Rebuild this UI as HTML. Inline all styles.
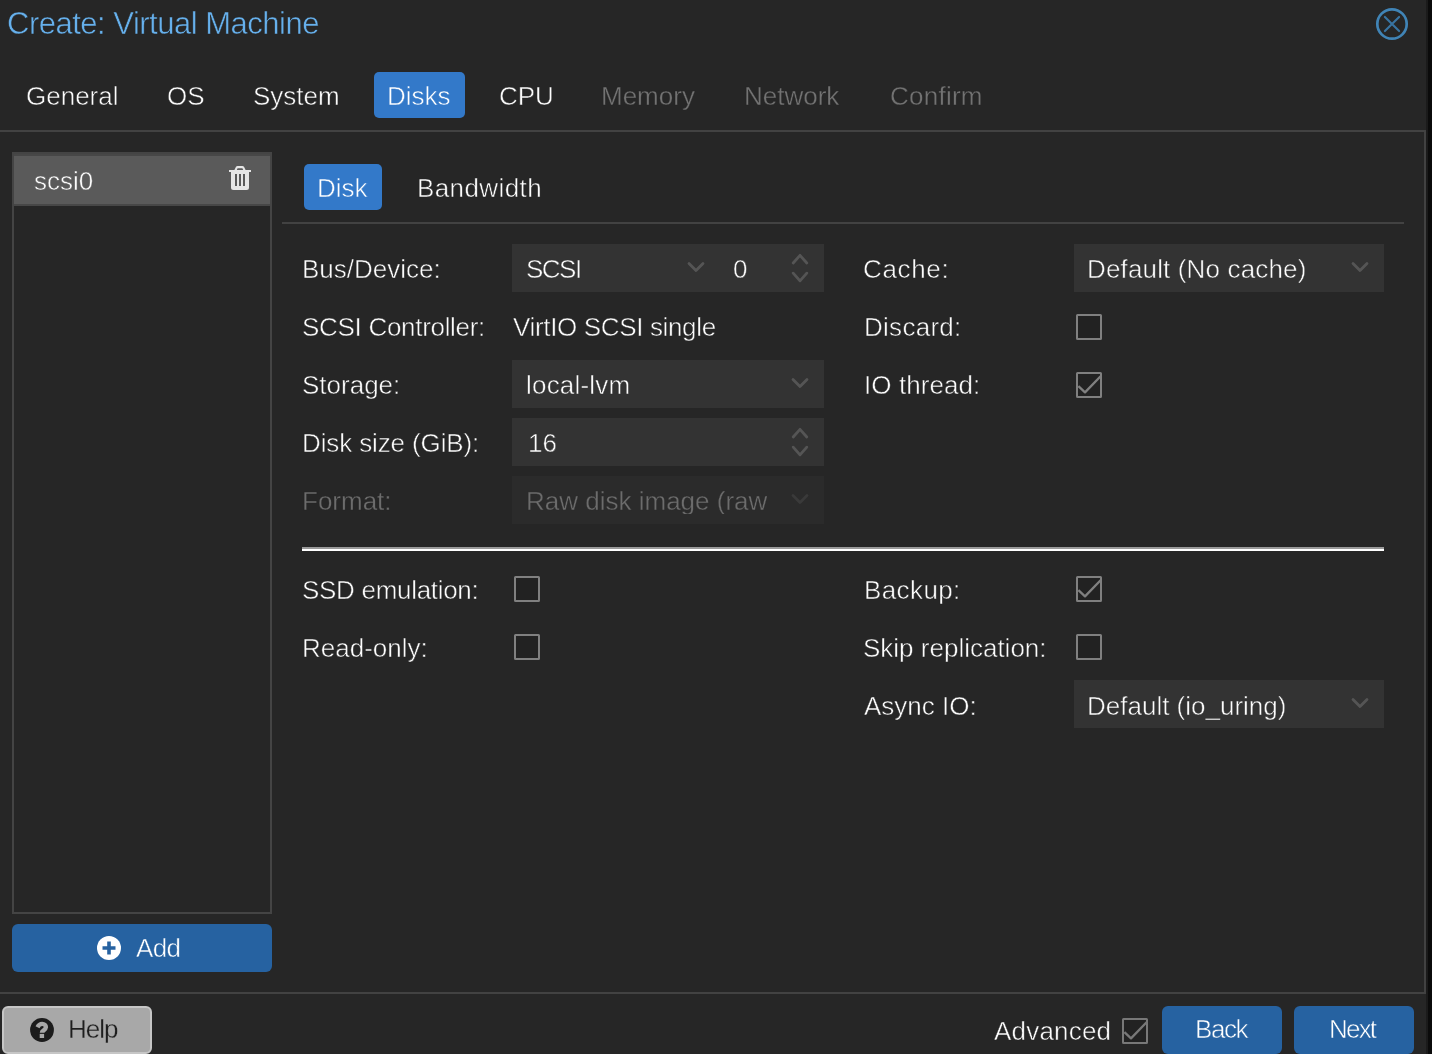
<!DOCTYPE html>
<html><head><meta charset="utf-8">
<style>
html,body{margin:0;padding:0;width:1432px;height:1054px;overflow:hidden;background:#0b0b0b;}
#win{position:absolute;left:0;top:0;width:1428px;height:1054px;background:#262626;overflow:hidden;}
.t{position:absolute;will-change:transform;-webkit-text-stroke:0.5px var(--b,#262626);font-family:"Liberation Sans",sans-serif;font-size:26px;line-height:26px;height:26px;white-space:nowrap;color:#fcfcfc;}
.r{position:absolute;}
.field{position:absolute;background:#333333;height:48px;}
.cb{position:absolute;width:22px;height:22px;border:2px solid #808080;background:#222222;border-radius:1.5px;}
.gray{color:#727272;-webkit-text-stroke-width:0.35px;}
svg{position:absolute;overflow:visible;}
</style></head><body>
<div id="win">
  <div class="r" style="left:1426px;top:0;width:2px;height:1054px;background:#1b1b1b;"></div>
  <!-- title -->
  <div class="t" style="left:7.4px;top:7.95px;font-size:31px;line-height:31px;height:31px;color:#66b0ec;--b:#262626;-webkit-text-stroke-width:0.5px;letter-spacing:-0.5px;">Create: Virtual Machine</div>
  <!-- close -->
  <svg style="left:1376px;top:8px" width="32" height="32" viewBox="0 0 32 32">
    <circle cx="16" cy="16" r="14.7" fill="none" stroke="#4084b6" stroke-width="2.7"/>
    <path d="M8.9 8.9 L23.1 23.1 M23.1 8.9 L8.9 23.1" stroke="#3874a2" stroke-width="2.1" stroke-linecap="round"/>
  </svg>

  <!-- wizard tabs -->
  <div class="r" style="left:374px;top:72px;width:91px;height:46px;background:#3379c9;border-radius:5px;"></div>
  <div class="t" style="left:25.8px;top:83.2px;">General</div>
  <div class="t" style="left:167.2px;top:83.2px;">OS</div>
  <div class="t" style="left:253.2px;top:83.2px;">System</div>
  <div class="t" style="left:386.8px;top:83.2px;color:#fff;--b:#3379c9;">Disks</div>
  <div class="t" style="left:499px;top:83.2px;">CPU</div>
  <div class="t gray" style="left:601.3px;top:83.2px;">Memory</div>
  <div class="t gray" style="left:743.9px;top:83.2px;">Network</div>
  <div class="t gray" style="left:889.5px;top:83.2px;letter-spacing:0.25px;">Confirm</div>

  <!-- body frame -->
  <div class="r" style="left:0;top:130px;width:1426px;height:2px;background:#424242;"></div>
  <div class="r" style="left:1424px;top:130px;width:2px;height:864px;background:#424242;"></div>
  <div class="r" style="left:0;top:992px;width:1426px;height:2px;background:#424242;"></div>

  <!-- left list -->
  <div class="r" style="left:12px;top:152px;width:256px;height:758px;border:2px solid #444;"></div>
  <div class="r" style="left:14px;top:154px;width:256px;height:48px;border-top:2px solid #474747;border-bottom:2px solid #474747;background:#5a5a5a;"></div>
  <div class="t" style="left:34.2px;top:168.2px;--b:#5a5a5a;">scsi0</div>
  <svg style="left:228px;top:165px" width="24" height="26" viewBox="0 0 24 26">
    <path fill="#e6e6e6" fill-rule="evenodd" d="M1 5 H23 V7 H1 Z M6.4 5 L8 1.8 Q8.6 1 9.6 1 H14.4 Q15.4 1 16 1.8 L17.6 5 H15.2 L14.4 3.2 H9.6 L8.8 5 Z M3 7 H21 V22.5 Q21 25 18.5 25 H5.5 Q3 25 3 22.5 Z M7 9 V21 H9 V9 Z M11 9 V21 H13 V9 Z M15 9 V21 H17 V9 Z"/>
  </svg>

  <!-- add button -->
  <div class="r" style="left:12px;top:924px;width:260px;height:48px;background:#2662a1;border-radius:6px;"></div>
  <svg style="left:97px;top:936px" width="24" height="24" viewBox="0 0 24 24">
    <circle cx="12" cy="12" r="12" fill="#ffffff"/>
    <path d="M12 5.5 V18.5 M5.5 12 H18.5" stroke="#2662a1" stroke-width="3.6"/>
  </svg>
  <div class="t" style="left:135.5px;top:934.5px;color:#fff;--b:#2662a1;letter-spacing:-0.6px;">Add</div>

  <!-- inner tabs -->
  <div class="r" style="left:304px;top:164px;width:78px;height:46px;background:#3379c9;border-radius:5px;"></div>
  <div class="t" style="left:317.1px;top:174.5px;color:#fff;--b:#3379c9;">Disk</div>
  <div class="t" style="left:417.1px;top:174.5px;letter-spacing:0.4px;">Bandwidth</div>
  <div class="r" style="left:282px;top:222px;width:1122px;height:2px;background:#424242;"></div>

  <!-- form left column -->
  <div class="t" style="left:302px;top:256.2px;">Bus/Device:</div>
  <div class="field" style="left:512px;top:244px;width:312px;"></div>
  <div class="t" style="left:525.7px;top:256px;--b:#333;letter-spacing:-1.5px;">SCSI</div>
  <svg style="left:685.9px;top:259.9px" width="20" height="14" viewBox="0 0 20 14"><path d="M3 3.4 L10 10.6 L17 3.4" fill="none" stroke="#555555" stroke-width="2.8" stroke-linecap="round" stroke-linejoin="round"/></svg>
  <div class="t" style="left:733.4px;top:256px;--b:#333;">0</div>
  <svg style="left:790.0px;top:248.0px" width="20" height="40" viewBox="0 0 20 40"><path d="M3.2 15.05 L10 7.35 L16.8 15.05 M3.2 25.15 L10 32.85 L16.8 25.15" fill="none" stroke="#555555" stroke-width="2.8" stroke-linecap="round" stroke-linejoin="round"/></svg>

  <div class="t" style="left:302.3px;top:314.1px;letter-spacing:-0.3px;">SCSI Controller:</div>
  <div class="t" style="left:513px;top:314.1px;letter-spacing:-0.35px;">VirtIO SCSI single</div>

  <div class="t" style="left:301.8px;top:372px;">Storage:</div>
  <div class="field" style="left:512px;top:360px;width:312px;"></div>
  <div class="t" style="left:526.4px;top:372px;--b:#333;letter-spacing:0.2px;">local-lvm</div>
  <svg style="left:790.0px;top:375.8px" width="20" height="14" viewBox="0 0 20 14"><path d="M3 3.4 L10 10.6 L17 3.4" fill="none" stroke="#555555" stroke-width="2.8" stroke-linecap="round" stroke-linejoin="round"/></svg>

  <div class="t" style="left:302px;top:430px;letter-spacing:-0.12px;">Disk size (GiB):</div>
  <div class="field" style="left:512px;top:418px;width:312px;"></div>
  <div class="t" style="left:527.5px;top:430px;--b:#333;">16</div>
  <svg style="left:790.0px;top:422.0px" width="20" height="40" viewBox="0 0 20 40"><path d="M3.2 15.05 L10 7.35 L16.8 15.05 M3.2 25.15 L10 32.85 L16.8 25.15" fill="none" stroke="#555555" stroke-width="2.8" stroke-linecap="round" stroke-linejoin="round"/></svg>

  <div class="t" style="left:302px;top:488px;color:#6c6c6c;-webkit-text-stroke-width:0.35px;">Format:</div>
  <div class="field" style="left:512px;top:476px;width:312px;background:#2b2b2b;"></div>
  <div class="t" style="left:525.7px;top:488px;width:241px;overflow:hidden;color:#6c6c6c;--b:#2b2b2b;-webkit-text-stroke-width:0.35px;">Raw disk image (raw)</div>
  <svg style="left:790.0px;top:491.8px" width="20" height="14" viewBox="0 0 20 14"><path d="M3 3.4 L10 10.6 L17 3.4" fill="none" stroke="#3a3a3a" stroke-width="2.8" stroke-linecap="round" stroke-linejoin="round"/></svg>

  <!-- form right column -->
  <div class="t" style="left:863.1px;top:256.2px;letter-spacing:0.65px;">Cache:</div>
  <div class="field" style="left:1074px;top:244px;width:310px;"></div>
  <div class="t" style="left:1086.7px;top:256px;--b:#333;letter-spacing:0.15px;">Default (No cache)</div>
  <svg style="left:1350.0px;top:259.8px" width="20" height="14" viewBox="0 0 20 14"><path d="M3 3.4 L10 10.6 L17 3.4" fill="none" stroke="#555555" stroke-width="2.8" stroke-linecap="round" stroke-linejoin="round"/></svg>

  <div class="t" style="left:863.8px;top:314.1px;letter-spacing:0.28px;">Discard:</div>
  <div class="cb" style="left:1076px;top:314px;"></div>
  <div class="t" style="left:863.8px;top:372px;letter-spacing:0.07px;">IO thread:</div>
  <div class="cb" style="left:1076px;top:372px;"></div>
  <svg style="left:1076px;top:372px" width="26" height="26" viewBox="0 0 26 26"><path d="M2.4 14.2 L9 20.4 L24.6 4.2" stroke-linejoin="round" fill="none" stroke="#808080" stroke-width="2.3"/></svg>

  <!-- separator -->
  <div class="r" style="left:302px;top:547px;width:1082px;height:2px;background:#9a9a9a;"></div>
  <div class="r" style="left:302px;top:549px;width:1082px;height:2px;background:#ffffff;"></div>

  <!-- advanced section -->
  <div class="t" style="left:302px;top:576.5px;letter-spacing:-0.3px;">SSD emulation:</div>
  <div class="cb" style="left:514px;top:576px;"></div>
  <div class="t" style="left:302.3px;top:634.5px;">Read-only:</div>
  <div class="cb" style="left:514px;top:634px;"></div>

  <div class="t" style="left:863.6px;top:576.5px;letter-spacing:0.4px;">Backup:</div>
  <div class="cb" style="left:1076px;top:576px;"></div>
  <svg style="left:1076px;top:576px" width="26" height="26" viewBox="0 0 26 26"><path d="M2.4 14.2 L9 20.4 L24.6 4.2" stroke-linejoin="round" fill="none" stroke="#808080" stroke-width="2.3"/></svg>
  <div class="t" style="left:863.2px;top:634.5px;">Skip replication:</div>
  <div class="cb" style="left:1076px;top:634px;"></div>
  <div class="t" style="left:864.4px;top:692.5px;">Async IO:</div>
  <div class="field" style="left:1074px;top:680px;width:310px;"></div>
  <div class="t" style="left:1086.7px;top:692.5px;--b:#333;">Default (io_uring)</div>
  <svg style="left:1350.0px;top:695.8px" width="20" height="14" viewBox="0 0 20 14"><path d="M3 3.4 L10 10.6 L17 3.4" fill="none" stroke="#555555" stroke-width="2.8" stroke-linecap="round" stroke-linejoin="round"/></svg>

  <!-- footer -->
  <div class="r" style="left:2px;top:1006px;width:146px;height:44px;background:#a8a8a8;border:2px solid #c6c6c6;border-radius:6px;"></div>
  <svg style="left:30px;top:1018px" width="24" height="24" viewBox="0 0 24 24">
    <circle cx="12" cy="12" r="11.9" fill="#1c1c1c"/>
    <path d="M7.5 9.3 C8.6 7.0 10 5.9 12.2 5.9 C14.4 5.9 15.9 7.3 15.9 9.2 C15.8 11 14.6 11.8 13.4 12.6 C12.4 13.3 11.95 13.7 11.95 14.8" fill="none" stroke="#a8a8a8" stroke-width="4.4"/>
    <rect x="9.7" y="15.9" width="4.4" height="4.1" fill="#a8a8a8"/>
  </svg>
  <div class="t" style="left:67.5px;top:1016px;color:#1e1e1e;--b:#a8a8a8;-webkit-text-stroke-width:0.3px;letter-spacing:-1.0px;">Help</div>

  <div class="t" style="left:993.5px;top:1017.7px;letter-spacing:0.2px;">Advanced</div>
  <div class="cb" style="left:1122px;top:1018px;border-color:#787878;"></div>
  <svg style="left:1122px;top:1018px" width="26" height="26" viewBox="0 0 26 26"><path d="M2.4 14.2 L9 20.4 L24.6 4.2" stroke-linejoin="round" fill="none" stroke="#787878" stroke-width="2.3"/></svg>

  <div class="r" style="left:1162px;top:1006px;width:120px;height:48px;background:#2662a1;border-radius:6px;"></div>
  <div class="t" style="left:1194.8px;top:1016px;color:#fff;--b:#2662a1;letter-spacing:-1.4px;">Back</div>
  <div class="r" style="left:1294px;top:1006px;width:120px;height:48px;background:#2662a1;border-radius:6px;"></div>
  <div class="t" style="left:1329.4px;top:1016px;color:#fff;--b:#2662a1;letter-spacing:-1.8px;">Next</div>
</div>
</body></html>
